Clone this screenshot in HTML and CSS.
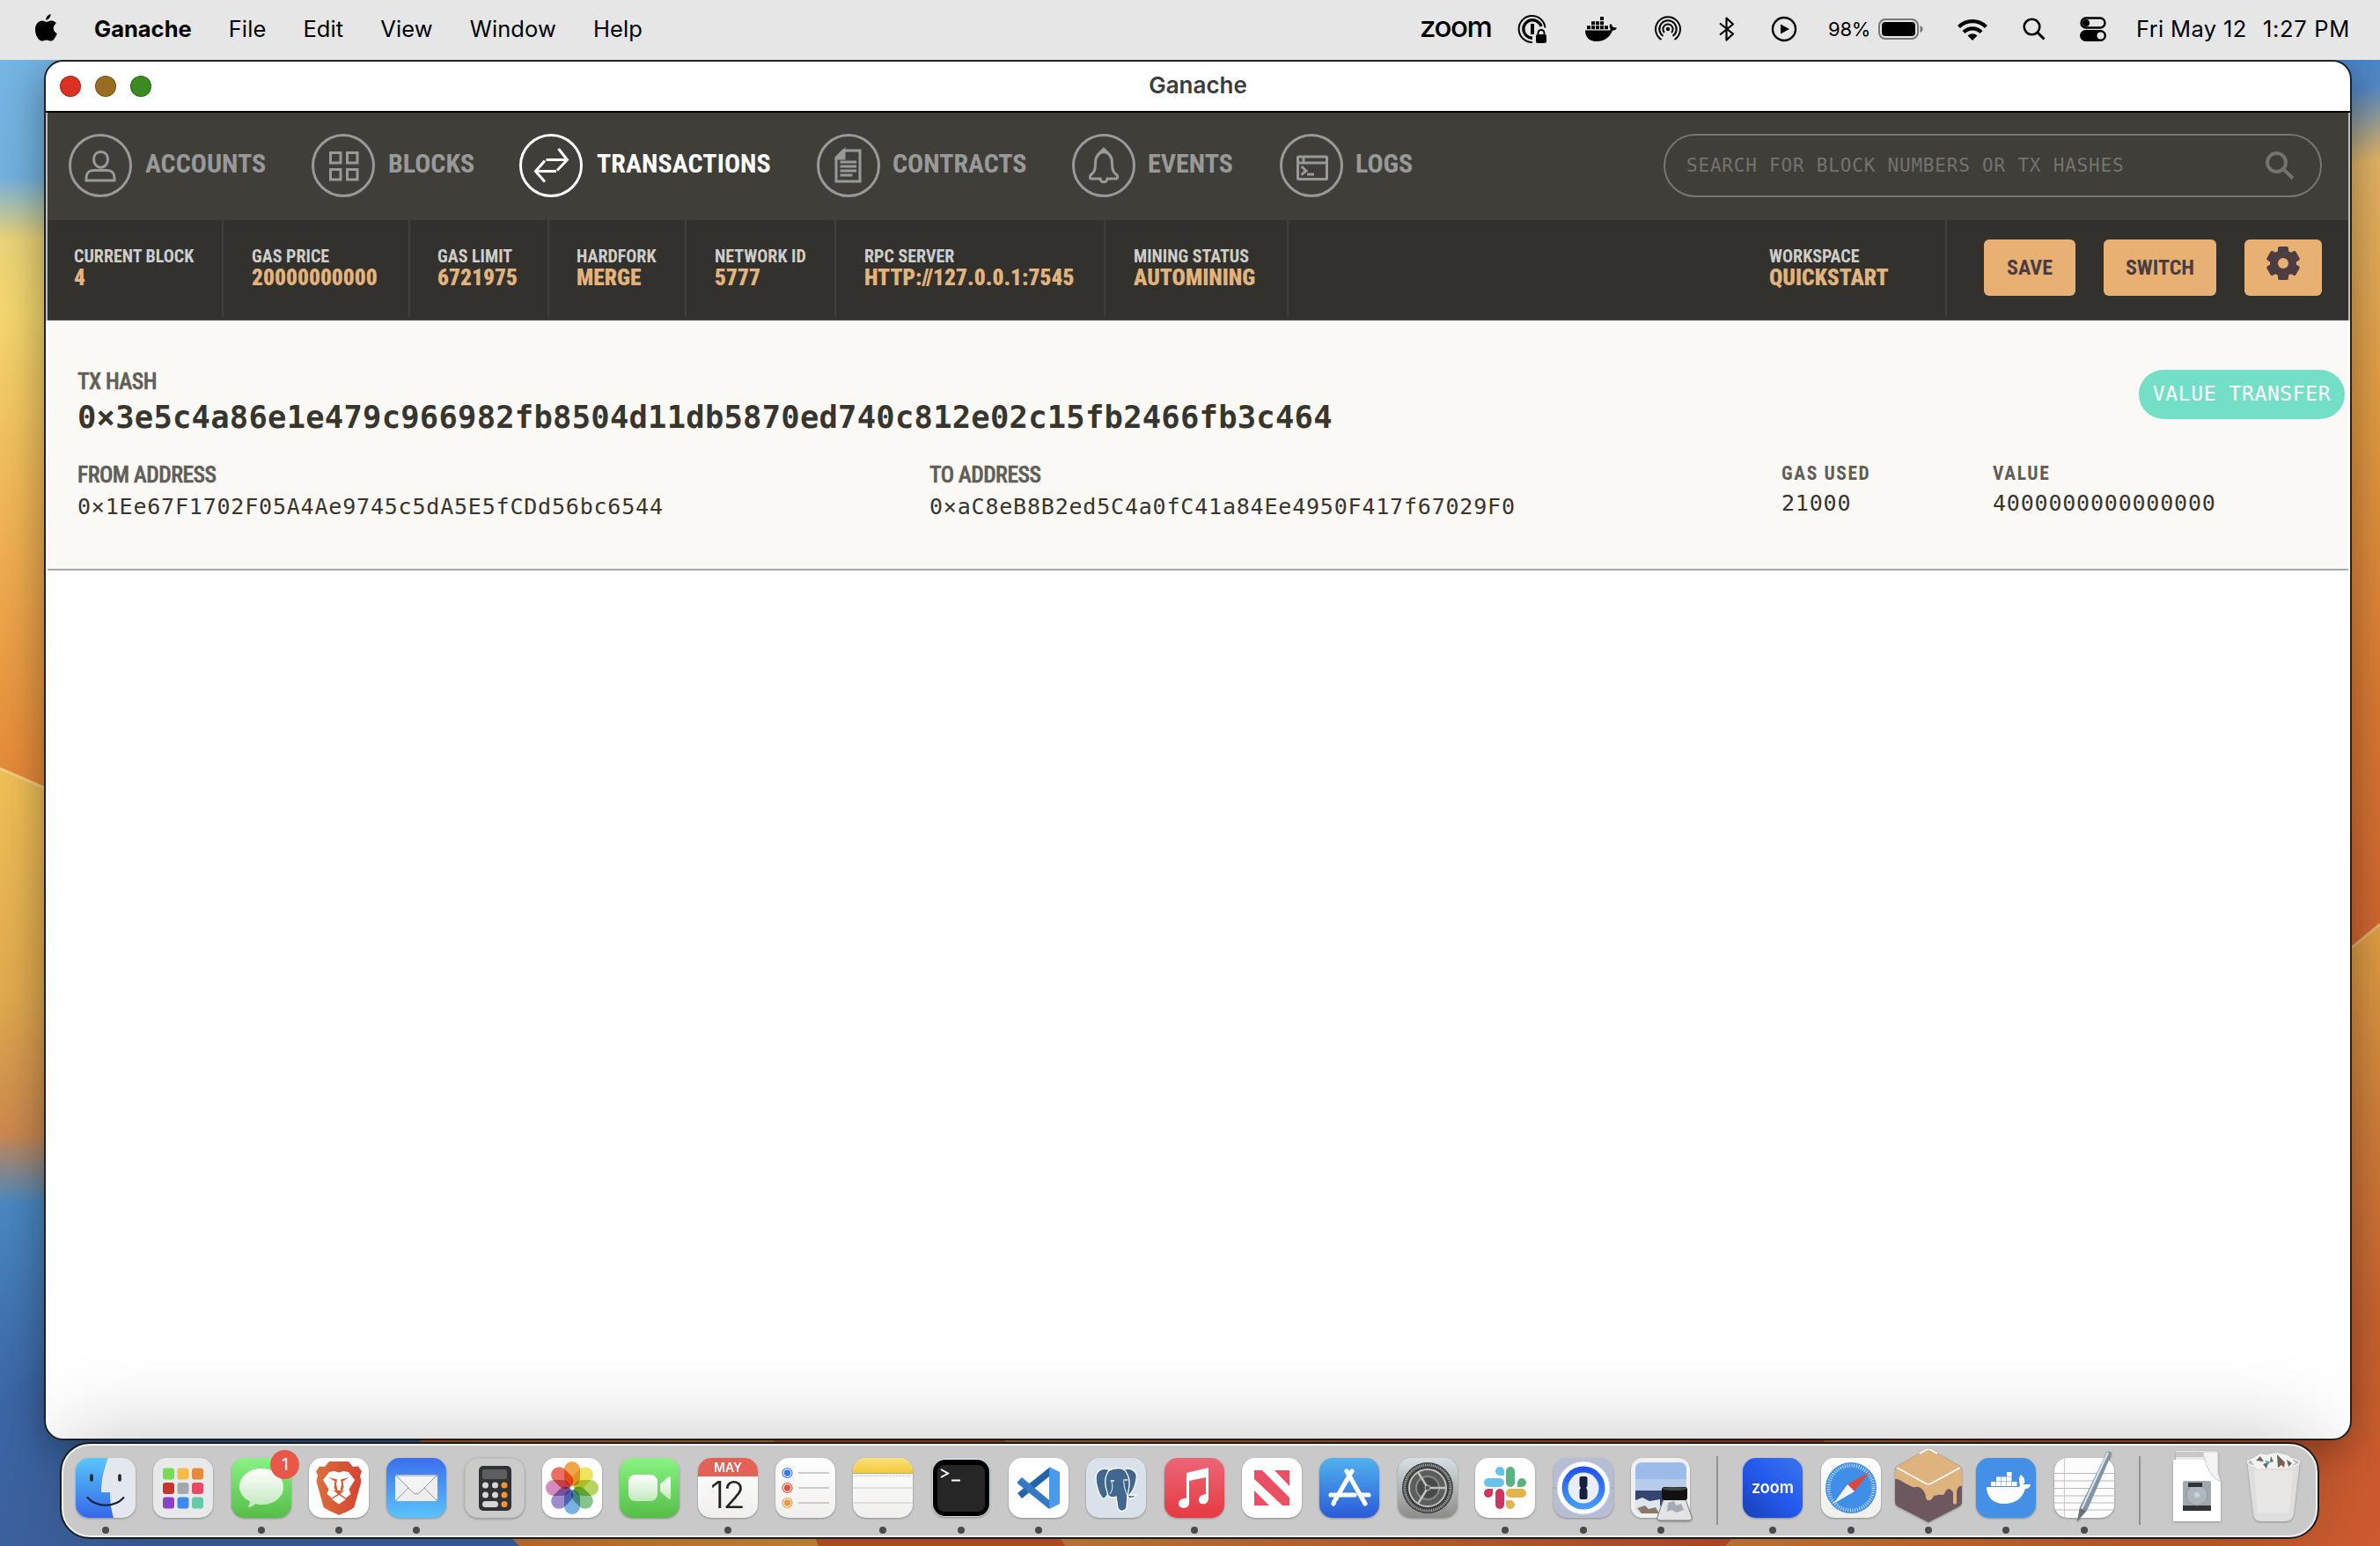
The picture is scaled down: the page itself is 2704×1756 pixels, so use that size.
FILE: index.html
```html
<!DOCTYPE html>
<html lang="en">
<head>
<meta charset="utf-8">
<title>Ganache</title>
<link rel="stylesheet" href="styles.css">
</head>
<body>
<svg class="wallpaper" viewBox="0 0 2704 1756" preserveAspectRatio="none" aria-hidden="true">
  <defs>
    <linearGradient id="wl1" gradientUnits="userSpaceOnUse" x1="0" y1="68" x2="0" y2="900">
      <stop offset="0" stop-color="#75b6e5"/><stop offset=".16" stop-color="#73b1df"/><stop offset=".245" stop-color="#ead377"/><stop offset=".35" stop-color="#f4d66d"/><stop offset=".65" stop-color="#f0b152"/><stop offset="1" stop-color="#e58736"/>
    </linearGradient>
    <linearGradient id="wl2" gradientUnits="userSpaceOnUse" x1="0" y1="870" x2="-20" y2="1756">
      <stop offset="0" stop-color="#f1c157"/><stop offset=".3" stop-color="#e0a94e"/><stop offset=".47" stop-color="#cc884e"/><stop offset=".56" stop-color="#4a88c1"/><stop offset=".8" stop-color="#3c68a8"/><stop offset="1" stop-color="#3c629f"/>
    </linearGradient>
    <linearGradient id="wr1" gradientUnits="userSpaceOnUse" x1="2650" y1="68" x2="2900" y2="1050">
      <stop offset="0" stop-color="#4887cf"/><stop offset=".04" stop-color="#5389c4"/><stop offset=".12" stop-color="#e3b566"/><stop offset=".4" stop-color="#e39c42"/><stop offset=".7" stop-color="#dc7b34"/><stop offset="1" stop-color="#cf6330"/>
    </linearGradient>
    <linearGradient id="wr2" gradientUnits="userSpaceOnUse" x1="0" y1="1050" x2="0" y2="1756">
      <stop offset="0" stop-color="#e0a145"/><stop offset=".3" stop-color="#d1803b"/><stop offset=".65" stop-color="#c96230"/><stop offset="1" stop-color="#d25c30"/>
    </linearGradient>
    <linearGradient id="wb1"><stop offset="0" stop-color="#c46a30"/><stop offset="1" stop-color="#cb8f40"/></linearGradient>
    <linearGradient id="wb2"><stop offset="0" stop-color="#c78640"/><stop offset="1" stop-color="#c0452a"/></linearGradient>
    <linearGradient id="wb3"><stop offset="0" stop-color="#cb7f3c"/><stop offset=".6" stop-color="#c9602f"/><stop offset="1" stop-color="#d05c30"/></linearGradient>
  </defs>
  <rect width="1352" height="1756" fill="url(#wl1)"/>
  <path d="M0 873L60 900H1352V1756H0z" fill="url(#wl2)"/>
  <path d="M0 873L60 899" stroke="#f2cd83" stroke-width="3"/>
  <rect x="1352" width="1352" height="1756" fill="url(#wr1)"/>
  <path d="M2704 1050L2660 1086H1352V1756H2704z" fill="url(#wr2)"/>
  <path d="M2704 1050L2660 1086" stroke="#e3b070" stroke-width="3"/>
  <path d="M475 1634L590 1756H930V1634z" fill="url(#wb1)"/>
  <path d="M878 1634L930 1756H1210L1140 1634z" fill="#c0522b"/>
  <path d="M1140 1634L1210 1756H1960L2075 1634z" fill="url(#wb2)"/>
  <path d="M2075 1634L1960 1756H2704V1634z" fill="url(#wb3)"/>
</svg>

<header class="menubar">
  <nav class="menus">
    <svg class="apple" viewBox="0 0 26 32"><path d="M17.500 0c.3 2.700-2 6.600-5.300 6.800C11.800 4 14.500.6 17.500 0zM12.700 8.900c1.400 0 3-1.500 5.700-1.400 2.200.1 4.300 1.200 5.500 3-4.700 3-3.900 9.600.9 11.500-1 3.200-3.800 8.500-6.800 8.600-2 .1-2.800-1.200-5.200-1.200-2.300 0-3.200 1.200-5.200 1.200C3.800 30.500 0 23.500 0 18c0-6.400 3.800-10.300 7.800-10.400 2.200 0 3.700 1.300 4.900 1.300z"/></svg>
    <b class="app-name">Ganache</b><span>File</span><span>Edit</span><span>View</span><span>Window</span><span>Help</span>
  </nav>
  <div class="tray">
    <span class="zoom-word">zoom</span>
    <svg class="t1" viewBox="0 0 32 32"><g fill="none" stroke="#000"><path d="M30.500 14.500A15 15 0 1 0 16 31" stroke-width="2"/><path d="M26 13A10.300 10.300 0 1 0 16 26.300" stroke-width="3.400"/></g><path d="M14 10h4v12h-4z"/><rect x="20" y="22" width="12" height="10" rx="2"/><path d="M22.500 22v-1.500a3.500 3.500 0 0 1 7 0V22" fill="none" stroke="#000" stroke-width="2"/></svg>
    <svg class="t2" viewBox="0 0 36 28"><path d="M0 15.500h26.500c1.500 0 2-.5 2.300-1.500-1.500-2-1.500-4-.3-6C30.500 9 31 10.500 31.500 12c1.500-.3 3 0 4.500.8-1 2-2.500 2.800-5 2.800C28 24 21.500 28 13 28 4 28 0 22.500 0 15.500z"/><path d="M2 10.300h4v4H2zM7 10.300h4v4H7zM12 10.300h4v4h-4zM17 10.300h4v4h-4zM22 10.300h4v4h-4zM7 5.200h4v4H7zM12 5.200h4v4h-4zM17 5.200h4v4h-4zM17 0h4v4h-4z"/></svg>
    <svg class="t3" viewBox="0 0 30 30"><g fill="none" stroke="#000" stroke-width="2"><path d="M7.500 27a14 14 0 1 1 15 0"/><path d="M9.500 23a9.700 9.700 0 1 1 11 0"/><path d="M11 19a5.600 5.600 0 1 1 8 0"/></g><circle cx="15" cy="15" r="2.200"/></svg>
    <svg class="t4" viewBox="0 0 18 30"><path d="M1 8.500l15 12-7.500 7V2.500l7.500 7L1 21.500" fill="none" stroke="#000" stroke-width="2.200" stroke-linejoin="round"/></svg>
    <svg class="t5" viewBox="0 0 30 30"><circle cx="15" cy="15" r="13" fill="none" stroke="#000" stroke-width="2.400"/><path d="M11 9.500l10 5.500-10 5.500z"/></svg>
    <span class="percent">98%</span>
    <svg class="t6" viewBox="0 0 52 24"><rect x="1" y="1" width="44" height="22" rx="7" fill="none" stroke="#777" stroke-width="2"/><rect x="4" y="4" width="38" height="16" rx="4"/><path d="M47.500 8c4 1.500 4 6.500 0 8z" fill="#777"/></svg>
    <svg class="t7" viewBox="0 0 34 25"><g fill="none" stroke="#000" stroke-width="4.200"><path d="M1.500 9.500a22 22 0 0 1 31 0"/><path d="M7 15.500a14 14 0 0 1 20 0"/></g><path d="M11.500 19.500a8 8 0 0 1 11 0L17 25z"/></svg>
    <svg class="t8" viewBox="0 0 26 26"><circle cx="10.500" cy="10.500" r="8.800" fill="none" stroke="#000" stroke-width="2.600"/><path d="M17 17l7.500 7.500" stroke="#000" stroke-width="3"/></svg>
    <svg class="t9" viewBox="0 0 30 28"><rect x="1.500" y="1.500" width="27" height="11" rx="5.500" fill="none" stroke="#000" stroke-width="2.400"/><circle cx="7" cy="7" r="4"/><rect y="15" width="30" height="13" rx="6.500"/><circle cx="23.500" cy="21.500" r="4" fill="#e6e6e6"/></svg>
    <span class="date">Fri May 12</span><span class="clock">1:27 PM</span>
  </div>
</header>

<main class="window">
  <div class="titlebar">
    <div class="lights"><i class="red"></i><i class="amber"></i><i class="green"></i></div>
    <h1>Ganache</h1>
  </div>
  <div class="app">
    <nav class="nav">
      <a class="tab accounts"><svg viewBox="0 0 72 72"><circle cx="36" cy="36" r="34.500"/><path d="M36.500 20.500c5 0 8 3.800 8 8.700s-3.500 9-8 9-8-4-8-9 3-8.700 8-8.700zM20 53v-3c0-5 3-8.500 8-8.500h16c5 0 8 3.500 8 8.500v3z"/></svg><span>ACCOUNTS</span></a>
      <a class="tab blocks"><svg viewBox="0 0 72 72"><circle cx="36" cy="36" r="34.500"/><path d="M21.500 21.500h11.500v11.500H21.500zM40.500 21.500H52v11.500H40.500zM21.500 40.500h11.500V52H21.500zM40.500 40.500H52V52H40.500z"/></svg><span>BLOCKS</span></a>
      <a class="tab transactions active"><svg viewBox="0 0 72 72"><circle cx="36" cy="36" r="34.500"/><path d="M30.500 29.500H54M44.500 17l10 12.500L43 41.500M42 42.500H18.500M29 30.500l-10.500 12L29 54.500"/></svg><span>TRANSACTIONS</span></a>
      <a class="tab contracts"><svg viewBox="0 0 72 72"><circle cx="36" cy="36" r="34.500"/><path d="M30 19h19v35H22V27z"/><path d="M23 28h8V19z" fill="#999"/><path d="M26.500 32H45M26.500 37H45M26.500 42H45M26.500 47h14"/></svg><span>CONTRACTS</span></a>
      <a class="tab events"><svg viewBox="0 0 72 72"><circle cx="36" cy="36" r="34.500"/><path d="M36 20.500c7 1 9.500 6.500 9.500 13 0 8 1.500 10 5 13 2 1.700 1.500 4.500-1 4.500H40c0 5-8 5-8 0h-9.500c-2.500 0-3-2.800-1-4.500 3.500-3 5-5 5-13 0-6.500 2.500-12 9.500-13z"/><path d="M33 20l3-3 3 3z"/></svg><span>EVENTS</span></a>
      <a class="tab logs"><svg viewBox="0 0 72 72"><circle cx="36" cy="36" r="34.500"/><rect x="20.500" y="26" width="33" height="25.500" rx="1"/><path d="M20 33h34M27 26v6M24.500 37l5.500 5-5.500 4.500M31 46h8"/></svg><span>LOGS</span></a>
      <label class="search"><span>SEARCH FOR BLOCK NUMBERS OR TX HASHES</span><svg viewBox="0 0 32 32"><circle cx="12.500" cy="12.500" r="10.500"/><path d="M20 20l11 10.500"/></svg></label>
    </nav>
    <section class="status">
      <div class="stat s1"><span>CURRENT BLOCK</span><b>4</b></div>
      <div class="stat s2"><span>GAS PRICE</span><b>20000000000</b></div>
      <div class="stat s3"><span>GAS LIMIT</span><b>6721975</b></div>
      <div class="stat s4"><span>HARDFORK</span><b>MERGE</b></div>
      <div class="stat s5"><span>NETWORK ID</span><b>5777</b></div>
      <div class="stat s6"><span>RPC SERVER</span><b>HTTP://127.0.0.1:7545</b></div>
      <div class="stat s7"><span>MINING STATUS</span><b>AUTOMINING</b></div>
      <div class="stat workspace"><span>WORKSPACE</span><b>QUICKSTART</b></div>
      <div class="actions">
        <button class="save">SAVE</button><button class="switch">SWITCH</button>
        <button class="settings"><svg viewBox="-20 -20 40 40"><g fill="#4b3d42"><rect x="-6" y="-19" width="12" height="38" rx="2"/><rect x="-6" y="-19" width="12" height="38" rx="2" transform="rotate(60)"/><rect x="-6" y="-19" width="12" height="38" rx="2" transform="rotate(120)"/><circle r="15"/></g><circle r="6" fill="#e8b072"/></svg></button>
      </div>
    </section>
    <article class="tx">
      <div class="tx-head">
        <div><h2>TX HASH</h2><p class="hash">0×3e5c4a86e1e479c966982fb8504d11db5870ed740c812e02c15fb2466fb3c464</p></div>
        <span class="badge">VALUE TRANSFER</span>
      </div>
      <div class="tx-body">
        <div><h2>FROM ADDRESS</h2><p>0×1Ee67F1702F05A4Ae9745c5dA5E5fCDd56bc6544</p></div>
        <div><h2>TO ADDRESS</h2><p>0×aC8eB8B2ed5C4a0fC41a84Ee4950F417f67029F0</p></div>
        <div class="small"><h3>GAS USED</h3><p>21000</p></div>
        <div class="small"><h3>VALUE</h3><p>4000000000000000</p></div>
      </div>
    </article>
  </div>
</main>

<footer class="dock">
  <svg class="defs" aria-hidden="true"><defs>
    <linearGradient id="blue" x2="0" y2="1"><stop stop-color="#3b6fec"/><stop offset="1" stop-color="#5bc3fa"/></linearGradient>
    <linearGradient id="blueR" x2="0" y2="1"><stop stop-color="#5ac6f8"/><stop offset="1" stop-color="#3467ea"/></linearGradient>
    <linearGradient id="green" x2="0" y2="1"><stop stop-color="#88f383"/><stop offset="1" stop-color="#56bd48"/></linearGradient>
    <linearGradient id="white" x2="0" y2="1"><stop stop-color="#fff"/><stop offset="1" stop-color="#f0efec"/></linearGradient>
    <linearGradient id="bubble" x2="0" y2="1"><stop stop-color="#fff"/><stop offset="1" stop-color="#c3e8bd"/></linearGradient>
    <linearGradient id="steel" x2="0" y2="1"><stop stop-color="#d6e0e6"/><stop offset="1" stop-color="#8d8c88"/></linearGradient>
    <linearGradient id="red" x2="0" y2="1"><stop stop-color="#ec6678"/><stop offset="1" stop-color="#e63a42"/></linearGradient>
    <linearGradient id="brave"><stop stop-color="#dc6f3e"/><stop offset="1" stop-color="#d4432f"/></linearGradient>
    <linearGradient id="store" x2="0" y2="1"><stop stop-color="#51b1ef"/><stop offset="1" stop-color="#2a5bd8"/></linearGradient>
    <linearGradient id="zoomg" x1="1" x2="0" y2="1"><stop stop-color="#3a74ee"/><stop offset=".5" stop-color="#2459ed"/><stop offset="1" stop-color="#1a3fb5"/></linearGradient>
    <linearGradient id="yellow" x2="0" y2="1"><stop stop-color="#fae07a"/><stop offset="1" stop-color="#f5c93c"/></linearGradient>
    <linearGradient id="key" x2="0" y2="1"><stop stop-color="#1f4fee"/><stop offset="1" stop-color="#48a0f4"/></linearGradient>
  </defs></svg>

  <div class="slot open"><svg viewBox="0 0 68 68"><rect width="68" height="68" rx="15" fill="#e4e7ed"/><path d="M15 0h22c-5 12-8 26-8 39h10c0 10 1 20 4 29H15A15 15 0 0 1 0 53V15A15 15 0 0 1 15 0z" fill="url(#blueR)"/><path d="M18 20v5M50 20v5" stroke="#222" stroke-width="3.500" stroke-linecap="round"/><path d="M13.500 45c10 11.500 31 11.500 41 0" fill="none" stroke="#152039" stroke-width="2" stroke-linecap="round"/></svg></div>
  <div class="slot"><svg viewBox="0 0 68 68"><rect width="68" height="68" rx="15" fill="#e8e9eb"/><g><rect x="11" y="11.500" width="13" height="13" rx="3" fill="#73dd56"/><rect x="27.500" y="11.500" width="13" height="13" rx="3" fill="#f3bd43"/><rect x="44" y="11.500" width="13" height="13" rx="3" fill="#e58a39"/><rect x="11" y="28" width="13" height="13" rx="3" fill="#ca3428"/><rect x="27.500" y="28" width="13" height="13" rx="3" fill="#a2a8ac"/><rect x="44" y="28" width="13" height="13" rx="3" fill="#e94a62"/><rect x="11" y="44.500" width="13" height="13" rx="3" fill="#8b42c9"/><rect x="27.500" y="44.500" width="13" height="13" rx="3" fill="#3d87f0"/><rect x="44" y="44.500" width="13" height="13" rx="3" fill="#65c8a6"/></g></svg></div>
  <div class="slot open"><svg viewBox="0 0 68 68"><rect width="68" height="68" rx="15" fill="url(#green)"/><path d="M34 12c14 0 25 9 25 21S48 53 34 53c-3 0-5-.4-7-1-3 3-6 4-9 4 2-2 3-4 3-6.500C14 46 9 40 9 33c0-12 11-21 25-21z" fill="url(#bubble)"/></svg><em>1</em></div>
  <div class="slot open"><svg viewBox="0 0 68 68"><rect width="68" height="68" rx="15" fill="#fff"/><path d="M23 4h22l5 6 6-.5 4 6-2 5 1.500 6-8 29c-1 3-17 9-17.500 9.500C33.500 64 18 58.500 16.500 55.500L8.500 26.500 10 20l-2-4.500 4-6 6 .5z" fill="url(#brave)"/><path d="M23 16l6-1 5 1.500L39 15l6 1 7 9-6.500 10.500 2 5.500-5.500 4.500-6.500-4.500h-3L26 45.500 20.500 41l2-5.500L16 25zM34 42l8 5-8 5.500-8-5.500z" fill="#fff"/><path d="M22 22l10 2.500-1 5.500 1.500 7L31 38l-2.500-4 1-7.500zM46 22l-10 2.500 1 5.500-1.500 7L37 38l2.500-4-1-7.500zM28 37h12l-6 5z" fill="#d8572f"/></svg></div>
  <div class="slot open"><svg viewBox="0 0 68 68"><rect width="68" height="68" rx="15" fill="url(#blue)"/><rect x="10" y="19" width="48" height="30" rx="3" fill="#eee"/><path d="M11 48l17-17M57 48L40 31" stroke="#999"/><path d="M11 20l19 19c2.500 2.500 5.500 2.500 8 0l19-19z" fill="#f4f4f4" stroke="#999"/></svg></div>
  <div class="slot"><svg viewBox="0 0 68 68"><rect width="68" height="68" rx="15" fill="#cbccca" stroke="#bbb"/><rect x="16" y="9" width="37" height="51" rx="5" fill="#303236"/><rect x="20" y="13" width="28" height="11" rx="2" fill="#5c5e62"/><g fill="#d6d6d6"><circle cx="23.500" cy="31" r="3.500"/><circle cx="34.500" cy="31" r="3.500"/><circle cx="23.500" cy="42" r="3.500"/><circle cx="34.500" cy="42" r="3.500"/><rect x="20" y="49" width="18" height="7" rx="3.500"/></g><g fill="#f09536"><circle cx="45" cy="31" r="3.500"/><circle cx="45" cy="42" r="3.500"/><circle cx="45" cy="52.500" r="3.500"/></g></svg></div>
  <div class="slot"><svg viewBox="0 0 68 68"><rect width="68" height="68" rx="15" fill="#fff"/><g class="petals" transform="translate(34 34)"><rect x="-9" y="-30" width="18" height="28" rx="9" fill="#f19a37"/><rect x="-9" y="-30" width="18" height="28" rx="9" fill="#efe04b" transform="rotate(45)"/><rect x="-9" y="-30" width="18" height="28" rx="9" fill="#add14f" transform="rotate(90)"/><rect x="-9" y="-30" width="18" height="28" rx="9" fill="#76bf80" transform="rotate(135)"/><rect x="-9" y="-30" width="18" height="28" rx="9" fill="#6ea8e0" transform="rotate(180)"/><rect x="-9" y="-30" width="18" height="28" rx="9" fill="#8f7fc9" transform="rotate(225)"/><rect x="-9" y="-30" width="18" height="28" rx="9" fill="#cd80b8" transform="rotate(270)"/><rect x="-9" y="-30" width="18" height="28" rx="9" fill="#ea604e" transform="rotate(315)"/></g></svg></div>
  <div class="slot"><svg viewBox="0 0 68 68"><rect width="68" height="68" rx="15" fill="url(#green)"/><rect x="10" y="19" width="33" height="30" rx="8" fill="url(#bubble)"/><path d="M46 30l9-8c2-1.500 3-1 3 1v22c0 2-1 2.500-3 1l-9-8z" fill="url(#bubble)"/></svg></div>
  <div class="slot open"><svg viewBox="0 0 68 68"><rect width="68" height="68" rx="15" fill="url(#white)"/><path d="M0 21v-6A15 15 0 0 1 15 0h38a15 15 0 0 1 15 15v6z" fill="#e46158"/><text x="34" y="16" class="cal-month">MAY</text><text x="33" y="57" class="cal-day">12</text></svg></div>
  <div class="slot"><svg viewBox="0 0 68 68"><rect width="68" height="68" rx="15" fill="url(#white)"/><g stroke-width="1.200"><circle cx="13.500" cy="17" r="5.500" fill="none" stroke="#3478f6"/><circle cx="13.500" cy="17" r="3.700" fill="#3478f6"/><circle cx="13.500" cy="34" r="5.500" fill="none" stroke="#eb4d3d"/><circle cx="13.500" cy="34" r="3.700" fill="#eb4d3d"/><circle cx="13.500" cy="51" r="5.500" fill="none" stroke="#f09a37"/><circle cx="13.500" cy="51" r="3.700" fill="#f09a37"/></g><path d="M26 17h35M26 34h35M26 51h35" stroke="#bdbdc2" stroke-width="1.600"/></svg></div>
  <div class="slot open"><svg viewBox="0 0 68 68"><rect width="68" height="68" rx="15" fill="url(#white)"/><path d="M0 17v-2A15 15 0 0 1 15 0h38a15 15 0 0 1 15 15v2z" fill="url(#yellow)"/><path d="M0 17.500h68" stroke="#b8a878"/><path d="M1 20.500h66" stroke="#bbb" stroke-dasharray="1 1"/><path d="M0 34h68M0 51h68" stroke="#d6d6d6" stroke-width="1.500"/></svg></div>
  <div class="slot open"><svg viewBox="0 0 68 68"><rect x="1" width="66" height="67" rx="15" fill="#c9dde4"/><rect x="2" y="2" width="64" height="64" rx="14" fill="#000"/><rect x="7" y="8" width="54" height="53" rx="8" fill="#262626"/><path d="M11 13l8 4.500-8 4.500M23 25.500h10" fill="none" stroke="#fff" stroke-width="2"/></svg></div>
  <div class="slot open"><svg viewBox="0 0 68 68"><rect width="68" height="68" rx="15" fill="#fff"/><path d="M10 40l5 6 31-25V11z" fill="#2563a8"/><path d="M10 27l5-5 31 26v10L10 29z" fill="#3478c6"/><path d="M46 10l12 6v36l-12 6z" fill="#479bea"/></svg></div>
  <div class="slot"><svg viewBox="0 0 68 68"><rect width="68" height="68" rx="15" fill="#d9e2ea"/><g fill="#41678f" stroke="#fff" stroke-width="1.300"><path d="M26 13c-8-2-15 1-15 10 0 8 4 20 8 23 3 1 5-4 7-7zM42 13c10-3 17 3 15 11-1 8-5 16-8 18 3 2 5 0 8 0-1 4-7 4-9 3z"/><path d="M24 17c2-6 19-8 22 0 5 8 3 16 1 26l-1 13c-1 5-8 6-10 1l-2-13c-5 2-10 0-10-5-3-8-3-16 0-22z"/></g><path d="M43 24c-1 7 2 14 4 20M28 25c3 6 2 12-1 16" fill="none" stroke="#fff"/><path d="M29 26h3M44 25h3" stroke="#fff" stroke-width="1.500"/></svg></div>
  <div class="slot open"><svg viewBox="0 0 68 68"><rect width="68" height="68" rx="15" fill="url(#red)"/><path d="M25 17l25-6v35c0 8-11 8-11 2 0-5 4-6 8-7V22l-19 4v25c0 8-12 7-12 1 0-5 5-6 9-6.500z" fill="#fff"/></svg></div>
  <div class="slot"><svg viewBox="0 0 68 68"><rect width="68" height="68" rx="15" fill="#fff"/><path d="M14 14h9l31 31v9h-8L14 24zM37 14h17v18zM14 37l17 17H14z" fill="#ea5064"/></svg></div>
  <div class="slot"><svg viewBox="0 0 68 68"><rect width="68" height="68" rx="15" fill="url(#store)"/><path d="M37 15L18.500 47M31 15l21 37M17 49l-1 3M13 42h27M48 42h8" stroke="#fff" stroke-width="5.200" stroke-linecap="round"/></svg></div>
  <div class="slot"><svg viewBox="0 0 68 68"><rect width="68" height="68" rx="15" fill="url(#steel)"/><circle cx="34" cy="34" r="29" fill="#3c3d3d"/><circle cx="34" cy="34" r="26" fill="none" stroke="#a8abab" stroke-width="3" stroke-dasharray="1.200 1"/><circle cx="34" cy="34" r="21" fill="#5c5e5e" stroke="#bfc1c1" stroke-width="2"/><circle cx="34" cy="34" r="13" fill="#484949" stroke="#888" stroke-width="2"/><path d="M34 34h21M34 34L23 16M34 34L23 52" stroke="#bfc1c1" stroke-width="2.500"/><circle cx="34" cy="34" r="3" fill="#555" stroke="#bbb"/></svg></div>
  <div class="slot open"><svg viewBox="0 0 68 68"><rect width="68" height="68" rx="15" fill="#fff"/><g fill="#68c3ea"><rect x="10" y="23" width="23" height="10" rx="5"/><path d="M33 20h-5a5 5 0 1 1 5-5z"/></g><g fill="#5bb281"><rect x="35" y="10" width="10" height="23" rx="5"/><path d="M48 33v-5a5 5 0 1 1 5 5z"/></g><g fill="#e3b34c"><rect x="35" y="35" width="23" height="10" rx="5"/><path d="M35 48h5a5 5 0 1 1-5 5z"/></g><g fill="#cd375f"><rect x="23" y="35" width="10" height="23" rx="5"/><path d="M20 35v5a5 5 0 1 1-5-5z"/></g></svg></div>
  <div class="slot open"><svg viewBox="0 0 68 68"><rect width="68" height="68" rx="15" fill="#b7bed4"/><path d="M0 34h68" stroke="#8f99b4"/><circle cx="34" cy="34" r="30" fill="#fff" stroke="#ccd3e2"/><circle cx="34" cy="34" r="24.500" fill="url(#key)"/><circle cx="34" cy="34" r="17.500" fill="#e9eefa"/><rect x="29.500" y="21" width="9" height="26" rx="2" fill="#15223f"/><path d="M29 31l2 3-2 3zM39 31l-2 3 2 3z" fill="#e9eefa"/></svg></div>
  <div class="slot open"><svg viewBox="0 0 68 68"><rect width="67" height="68" rx="13" fill="#f0f0f0"/><rect x="5" y="5" width="58" height="58" rx="7" fill="#9dbbe8"/><path d="M5 24h58v14H5z" fill="#b7cbea"/><path d="M5 37h58v17H5z" fill="#35456f"/><path d="M5 48l8-3 8 4 12-2v16H12a7 7 0 0 1-7-7z" fill="#dfe6ec"/><path d="M7 57l9-3 4 4 8-2 4 7H12z" fill="#8c7864"/><path d="M37 47h25l7 20c1 2-1 4-4 4H34c-3 0-5-2-4-4z" fill="#e2e4e4" stroke="#777"/><path d="M42 51l7-2 2 5 6-2 3 7-8 3-6-3-5 2z" fill="#a4abb4"/><rect x="35" y="33" width="29" height="15" rx="3" fill="#111"/><ellipse cx="49.500" cy="35" rx="14" ry="2" fill="#444"/></svg></div>
  <i class="divider"></i>
  <div class="slot open"><svg viewBox="0 0 68 68"><rect width="68" height="68" rx="15" fill="url(#zoomg)"/><text x="34" y="39.500" class="zoom-logo" textLength="48" lengthAdjust="spacingAndGlyphs">zoom</text></svg></div>
  <div class="slot open"><svg viewBox="0 0 68 68"><rect width="68" height="68" rx="15" fill="url(#white)"/><circle cx="34" cy="34" r="29" fill="#3f8ee8"/><circle cx="34" cy="34" r="25.500" fill="none" stroke="#d6e6f8" stroke-width="4" stroke-dasharray=".9 1.770"/><path d="M55 16L38 38l-8-8z" fill="#e0473c"/><path d="M14 52l16-22 8 8z" fill="#f4f4f4"/></svg></div>
  <div class="slot open"><svg class="tall" viewBox="0 0 76 84"><path d="M38 0l35 20q3 2 3 5v36q0 3-3 5L38 84 3 66q-3-2-3-5V25q0-3 3-5z" fill="#6d585f"/><path d="M38 0l35 20q3 2 3 5v18c-4-1-5 3-6 6v13c0 2-4 2-4 0V50c-3-5-7-5-9 0s-6 2-8 3c-3 1-5 0-6 3-2 4-8 5-8-1-1-7-7-12-11-11-5 1-7-2-10-3S5 34 0 35V25q0-3 3-5z" fill="#dfb37d"/><path d="M2 22l33 18q3 1.500 6 0l33-18M28 6l7-4q3-1.500 6 0l7 4" fill="none" stroke="#fff" stroke-width="1.600"/></svg></div>
  <div class="slot open"><svg viewBox="0 0 68 68"><rect width="68" height="68" rx="15" fill="#4490e6"/><path d="M12 33h37c1-1 1-4 0-5 2-1 4 0 5 2h8c0 3-3 5-6 5-3 11-12 17-24 17-13 0-20-8-20-19zM51 19c3 2 5 6 4 10h-5c-2-4-1-7 1-10z" fill="#fff"/><path d="M17 27h5.500v5H17zM23 27h5.500v5H23zM29 27h5.500v5H29zM35 27h5.500v5H35zM41 27h5.500v5H41zM23 21.500h5.500v5H23zM29 21.500h5.500v5H29zM35 21.500h5.500v5H35zM35 16h5.500v5H35z" fill="#fff"/></svg></div>
  <div class="slot open"><svg viewBox="0 0 68 68"><rect width="68" height="68" rx="15" fill="#fcfcfc"/><path d="M0 17.500h68M0 26h68M0 34.500h68M0 43h68M0 51h68M0 59h68" stroke="#b9b9b9" stroke-width="1.200"/><path d="M11.500 1v66" stroke="#ecc0bb" stroke-width="1.200"/><path d="M60-7q5-1 5 3L37 60l-11 12 3-16z" fill="#8293a5"/><path d="M61-6L31 58" stroke="#dbe5ee" stroke-width="2"/><path d="M29 57l7 3-10 12z" fill="#666e78"/></svg></div>
  <i class="divider"></i>
  <div class="slot doc"><svg viewBox="0 0 68 68"><path d="M8-8h46v36l4 6H8z" fill="#e9e9e9"/><path d="M5 2h36l5 12 13 10v48H5z" fill="#fff"/><path d="M39-7h17v24l3 10c-10-4-17-16-20-34z" fill="#f3f3f3" stroke="#ccc"/><path d="M8-7h31v6H8z" fill="#c7c7c7"/><rect x="16" y="26" width="32" height="34" rx="2" fill="#9fa9ae"/><path d="M16 54h32v6H16z" fill="#333"/><circle cx="32" cy="42" r="12" fill="#aeb8bc" stroke="#8d979b"/><circle cx="32" cy="42" r="3" fill="#ccd2d5"/><path d="M22 28h16v5H22z" fill="#333"/></svg></div>
  <div class="slot"><svg viewBox="0 0 68 68"><path d="M4 3h60l-7 60c-1 6-4 9-10 9H20c-6 0-8-3-9-9z" fill="#dedede"/><path d="M12 14h44l-4 48H16z" fill="#e8e7e6"/><ellipse cx="34" cy="5" rx="29.500" ry="6" fill="#bcbcbc" stroke="#f0f0f0" stroke-width="1.500"/><path d="M8 2l11-7 9 2 4 14-17 2zM27-4l10-2 14 3 8 9-11 6-20-1z" fill="#f3f3f3"/><path d="M14 3l5-5 4 6zM38-4l9 9-8 6zM22 7l6-2-2 7zM49 2l6 4-4 4zM31-2l3 6-4 1z" fill="#6f6257"/><path d="M24 3l6 1-2 4z" fill="#3fa9c9"/><path d="M42 7l5-2-1 6z" fill="#b14a35"/></svg></div>
</footer>
</body>
</html>
```
FILE: styles.css
```css
* { box-sizing: border-box; }

body {
  margin: 0;
  width: 2704px;
  height: 1756px;
  overflow: hidden;
  display: flex;
  flex-direction: column;
  font-family: Inter, "Liberation Sans", sans-serif;
}

h1, h2, h3, p { margin: 0; }
svg { display: block; overflow: visible; flex: none; }

.wallpaper {
  position: absolute;
  inset: 0;
  width: 2704px;
  height: 1756px;
  z-index: -1;
}

/* Menu bar */
.menubar {
  height: 68px;
  flex: none;
  background: #e6e6e6;
  display: flex;
  justify-content: space-between;
  align-items: center;
  font-size: 25.500px;
  line-height: 68px;
  white-space: nowrap;
  padding: 0 34px 2px 40px;
  position: relative;
}
.menus { display: flex; align-items: center; gap: 42px; }
.menus span { letter-spacing: .1px; }
.apple { width: 26px; height: 32px; margin-right: -1px; margin-top: -2px; }
.app-name { font-weight: 700; letter-spacing: 0; }
.tray { display: flex; align-items: center; }
.zoom-word { font-size: 33px; font-weight: 500; letter-spacing: -1.400px; width: 112px; line-height: 60px; margin-top: -7px; }
.t1 { width: 32px; height: 32px; margin-right: 44px; }
.t2 { width: 36px; height: 28px; margin-right: 43px; }
.t3 { width: 30px; height: 30px; margin-right: 43px; }
.t4 { width: 18px; height: 30px; margin-right: 41px; }
.t5 { width: 30px; height: 30px; margin-right: 35px; }
.percent { font-size: 22px; width: 57px; letter-spacing: -.2px; }
.t6 { width: 52px; height: 24px; margin-right: 38px; }
.t7 { width: 34px; height: 25px; margin-right: 40px; }
.t8 { width: 26px; height: 26px; margin-right: 39px; }
.t9 { width: 30px; height: 28px; margin-right: 34px; }
.date { width: 144px; letter-spacing: .35px; }
.clock { width: 99px; letter-spacing: .7px; }

/* Application window */
.window {
  width: 2622px;
  height: 1568px;
  flex: none;
  margin-left: 50px;
  border: 2px solid #1f2225;
  border-radius: 22px;
  overflow: hidden;
  background: #fff;
  box-shadow: 0 10px 50px rgba(0, 0, 0, .4);
}
.titlebar {
  height: 58px;
  border-bottom: 2px solid #000;
  display: grid;
  grid-template-columns: 1fr auto 1fr;
  align-items: center;
}
.titlebar h1 { font-size: 26px; font-weight: 600; color: #3c3c3c; line-height: 54px; margin-top: -2px; }
.lights { display: flex; gap: 16px; padding-left: 16px; }
.lights i { width: 24px; height: 24px; border-radius: 50%; border: 1px solid rgba(0, 0, 0, .25); }
.red { background: #dc3023; }
.amber { background: #986d22; }
.green { background: #3b8a22; }

.app { font-family: "Roboto Condensed", Roboto, sans-serif; font-stretch: 75%; }

.nav {
  height: 122px;
  background: #3f3e39;
  border: solid #bdbdbb;
  border-width: 0 2px;
  display: flex;
  align-items: center;
  padding: 0 30px 0 24px;
}
.tab { display: flex; align-items: center; gap: 15px; color: #999; font-size: 30px; font-weight: 700; margin-top: -2px; }
.tab svg { width: 72px; height: 72px; fill: none; stroke: #999; stroke-width: 3; }
.tab span { margin-top: -6px; }
.active { color: #fff; letter-spacing: .1px; }
.active svg { stroke: #fff; }
.accounts { width: 276px; }
.blocks { width: 236px; }
.transactions { width: 338px; gap: 16px; }
.contracts { width: 290px; }
.contracts, .events, .logs { gap: 14px; }
.events { width: 236px; }
.search {
  width: 748px;
  height: 72px;
  margin: -2px 0 0 auto;
  border: 2px solid #777672;
  border-radius: 36px;
  display: flex;
  align-items: center;
  justify-content: space-between;
  padding: 0 30px 0 24px;
  color: #74736f;
  font-family: "DejaVu Sans Mono", monospace;
  font-size: 21px;
  letter-spacing: .8px;
  white-space: nowrap;
}
.search svg { width: 32px; height: 32px; fill: none; stroke: #74736f; stroke-width: 4; }

.status {
  height: 114px;
  background: #32312e;
  border: solid #bdbdbb;
  border-width: 0 2px;
  box-shadow: inset 0 -2px #3e3d3a;
  display: flex;
  font-weight: 700;
  white-space: nowrap;
}
.stat {
  height: 110px;
  border-right: 2px solid #403f3b;
  padding: 30px 0 0 32px;
  display: flex;
  flex-direction: column;
}
.stat span { font-size: 20px; line-height: 22px; color: #cfcecb; }
.stat b { font-size: 25.400px; line-height: 27px; color: #e2b37c; }
.s1 { width: 200px; padding-left: 30px; }
.s2 { width: 212px; }
.s3 { width: 158px; padding-left: 31px; }
.s4 { width: 156px; padding-left: 31px; }
.s5 { width: 170px; }
.s6 { width: 306px; }
.s7 { width: 208px; }
.workspace { width: 234px; margin-left: auto; }
.actions { width: 456px; padding: 22px 0 0 42px; display: flex; gap: 32px; }
.actions button {
  height: 64px;
  border: 0;
  border-radius: 6px;
  padding: 0;
  background: #e8b072;
  color: #4b3d42;
  font: inherit;
  font-size: 24px;
}
.save { width: 104px; }
.switch { width: 128px; }
.actions .settings { width: 88px; display: flex; justify-content: center; align-items: flex-start; padding-top: 7px; }
.settings svg { width: 40px; height: 40px; }

/* Transaction detail */
.tx { height: 284px; margin: 0 2px; background: #faf9f6; border-bottom: 2px solid #a9a9a9; padding-left: 34px; color: #38352f; white-space: nowrap; }
.tx h2 { font-size: 25.500px; line-height: 30px; font-weight: 500; color: #5f5e59; letter-spacing: -.55px; -webkit-text-stroke: .5px #5f5e59; }
.tx p { font-family: "DejaVu Sans Mono", monospace; font-size: 25px; line-height: 34px; letter-spacing: .8px; }
.tx-head { height: 148px; display: flex; justify-content: space-between; padding: 54px 4px 0 0; }
.tx .hash { font-size: 35.500px; line-height: 52px; font-weight: 700; letter-spacing: .230px; }
.badge {
  width: 234px;
  height: 56px;
  margin-top: 2px;
  border-radius: 28px;
  background: #74dfc7;
  color: #fff;
  font-family: "DejaVu Sans Mono", monospace;
  font-size: 23px;
  letter-spacing: .6px;
  line-height: 55px;
  text-align: center;
}
.tx-body { display: grid; grid-template-columns: 968px 968px 240px auto; padding-top: 12px; }
.tx-body p { margin-top: 5px; }
.tx h3 { font-size: 21.500px; line-height: 28px; font-weight: 700; color: #5f5e59; letter-spacing: 1.600px; }
.tx-body .small p { margin-top: 3px; }

/* Dock */
.dock {
  position: relative;
  flex: none;
  width: 2567px;
  height: 110px;
  margin: 2px 0 0 68px;
  border: 2px solid #1c1b1c;
  border-radius: 34px;
  background: #c9c9c9;
  box-shadow: inset 0 0 0 2px #f1f1f1, 0 0 100px rgba(0, 0, 0, .25);
  display: flex;
  padding: 16px 0 0 5.800px;
}
.defs { position: absolute; width: 0; height: 0; }
.slot { position: relative; width: 88.350px; flex: none; display: flex; flex-direction: column; align-items: center; }
.slot svg { width: 68px; height: 68px; filter: drop-shadow(0 1px 1px rgba(0, 0, 0, .3)); }
.slot .tall { width: 76px; height: 84px; margin: -11px 0 -5px; }
.doc { left: 3px; }
.open::after { content: ""; width: 8px; height: 8px; border-radius: 50%; background: #4a4a4a; margin-top: 10px; }
.slot em {
  position: absolute;
  left: 55px;
  top: -9px;
  width: 33px;
  height: 33px;
  border-radius: 50%;
  background: #e9574a;
  color: #fff;
  font: 400 19px/33px Inter, sans-serif;
  text-align: center;
}
.petals rect { mix-blend-mode: multiply; opacity: .9; }
.cal-month { font: 600 14px Inter, sans-serif; fill: #fff; text-anchor: middle; }
.cal-day { font: 300 42px Inter, sans-serif; fill: #222; text-anchor: middle; letter-spacing: -2px; }
.zoom-logo { font: 600 19px Inter, sans-serif; fill: #fff; text-anchor: middle; }
.divider { width: 39px; flex: none; height: 78px; margin-top: -2px; background: linear-gradient(#929292, #929292) center / 2px 100% no-repeat; }
```
